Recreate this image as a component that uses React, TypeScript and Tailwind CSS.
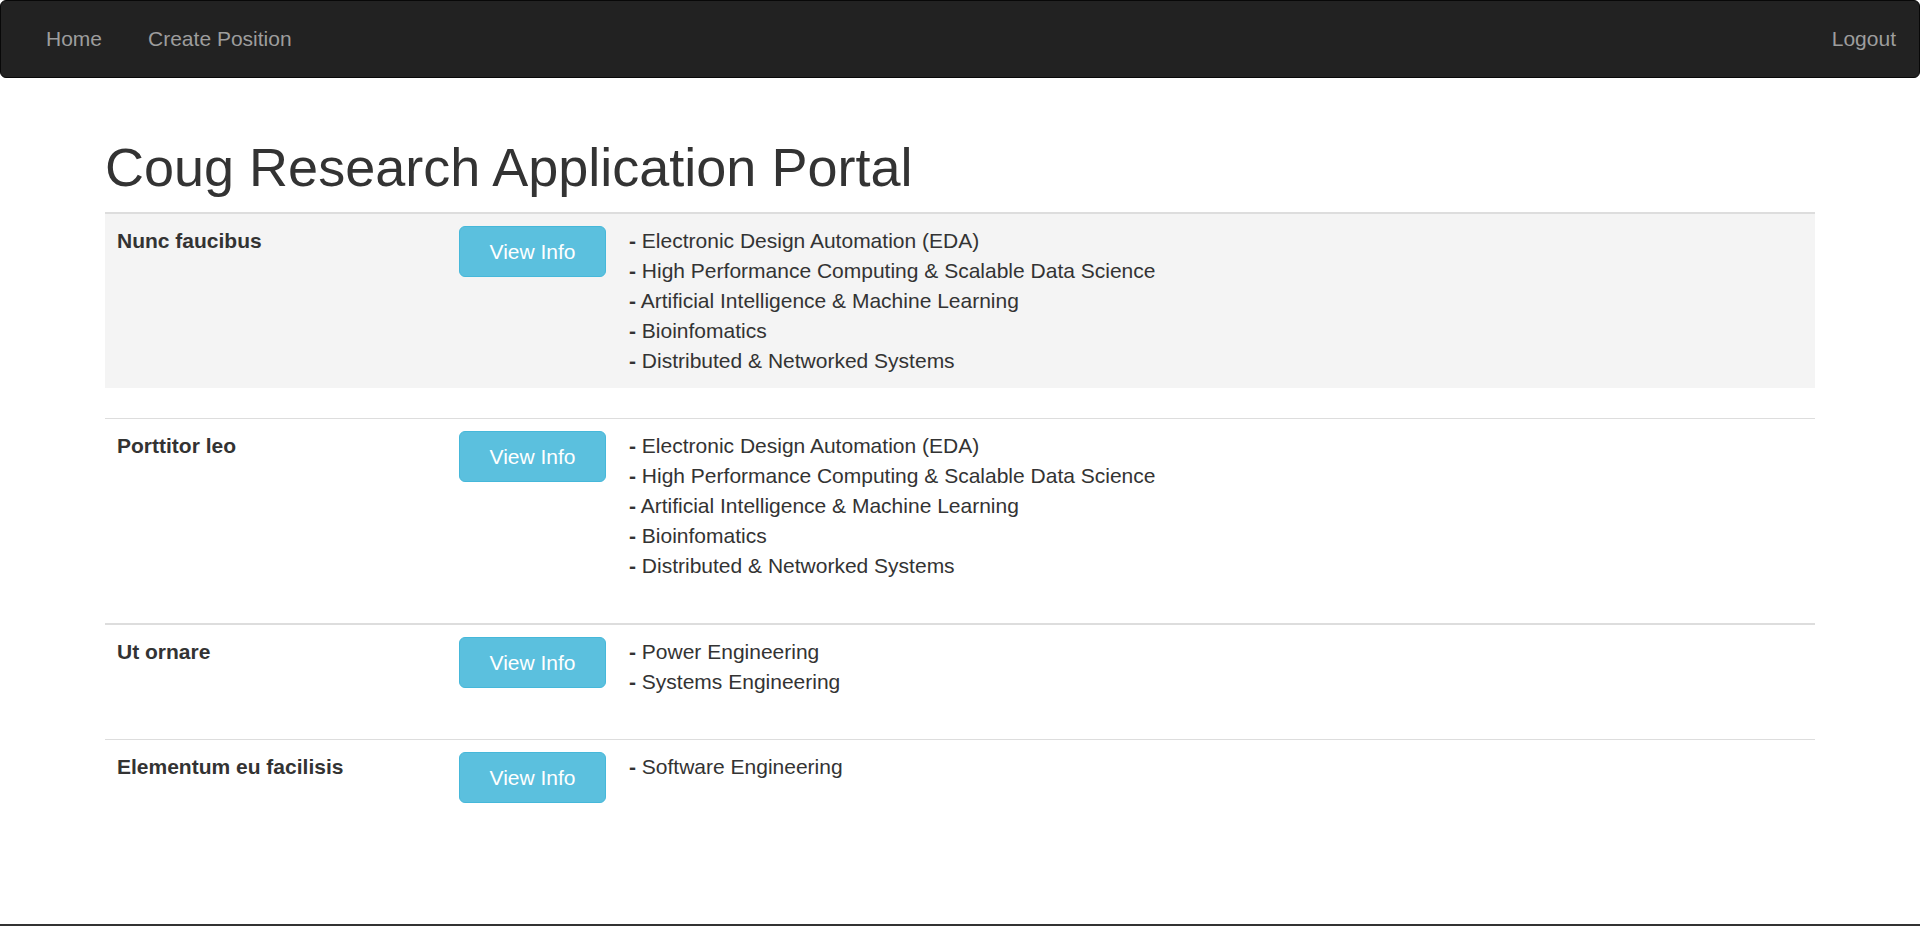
const positions = [
  {
    name: "Nunc faucibus",
    areas: [
      "Electronic Design Automation (EDA)",
      "High Performance Computing & Scalable Data Science",
      "Artificial Intelligence & Machine Learning",
      "Bioinfomatics",
      "Distributed & Networked Systems",
    ],
  },
  {
    name: "Porttitor leo",
    areas: [
      "Electronic Design Automation (EDA)",
      "High Performance Computing & Scalable Data Science",
      "Artificial Intelligence & Machine Learning",
      "Bioinfomatics",
      "Distributed & Networked Systems",
    ],
  },
  {
    name: "Ut ornare",
    areas: ["Power Engineering", "Systems Engineering"],
  },
  {
    name: "Elementum eu facilisis",
    areas: ["Software Engineering"],
  },
];

function PositionRow({ name, areas, index }: { name: string; areas: string[]; index: number }) {
  const striped = index === 0;
  const thick = index % 2 === 0;

  return (
    <div className={thick ? "border-t-2 border-[#dddddd]" : "border-t border-[#dddddd]"}>
      <div className={striped ? "flex bg-[#f4f4f4]" : "flex"}>
        <div className="w-[342px] shrink-0 p-3 font-bold">{name}</div>
        <div className="w-[170px] shrink-0 p-3">
          <button
            type="button"
            className="h-[51px] w-[147px] rounded-[6px] border border-[#46b8da] bg-[#5bc0de] text-[21px] text-white"
          >
            View Info
          </button>
        </div>
        <ul className="flex-1 p-3">
          {areas.map((a, i) => (
            <li key={i}>
              <b>-</b> {a}
            </li>
          ))}
        </ul>
      </div>
      <div className="h-[30px]" />
    </div>
  );
}

export default function App() {
  return (
    <div
      className="flex h-[926px] flex-col overflow-hidden bg-white text-[21px] leading-[30px] text-[#333333]"
      style={{ fontFamily: '"Liberation Sans", Arial, sans-serif' }}
    >
      <nav className="flex h-[78px] shrink-0 items-center justify-between rounded-[6px] border border-[#080808] bg-[#222222] pl-[22px] text-[#9d9d9d]">
        <div className="flex">
          <a className="px-[23px]">Home</a>
          <a className="px-[23px]">Create Position</a>
        </div>
        <a className="px-[23px]">Logout</a>
      </nav>

      <main className="mx-auto w-[1710px] flex-1">
        <h1 className="mb-[15px] mt-[60px] text-[54px] font-medium leading-[59px]">
          Coug Research Application Portal
        </h1>
        <div>
          {positions.map((p, i) => (
            <PositionRow key={p.name} name={p.name} areas={p.areas} index={i} />
          ))}
        </div>
      </main>

      <div className="h-[2px] shrink-0 bg-[#333333]" />
    </div>
  );
}
